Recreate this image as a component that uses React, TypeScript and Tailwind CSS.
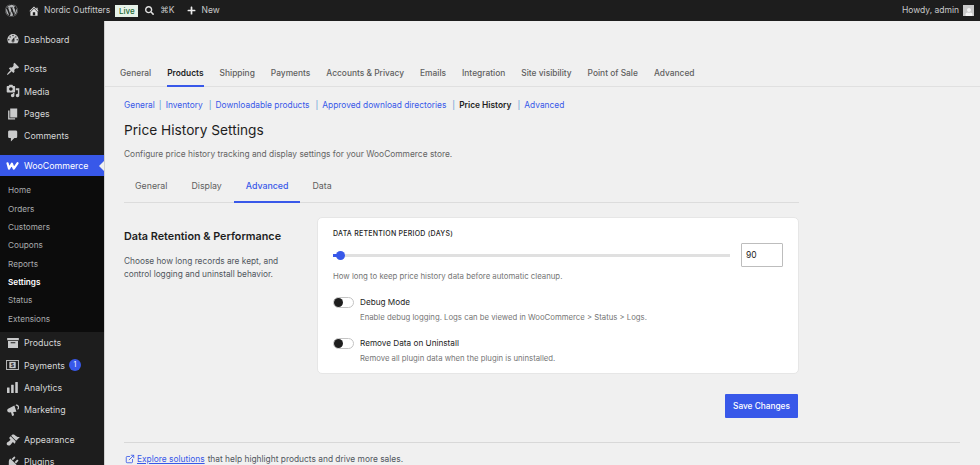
import { ReactNode } from "react";
import { FaWordpress, FaSearch, FaPlus, FaUser } from "react-icons/fa";
import { LuExternalLink } from "react-icons/lu";

// dashicon style glyph on a 20x20 box
function Dash({ d, className = "w-[14px] h-[14px]" }: { d: string; className?: string }) {
  return (
    <svg viewBox="0 0 20 20" className={className} fill="currentColor">
      <path d={d} />
    </svg>
  );
}

const icons = {
  home: "M16 8.5l1.53 1.53-1.06 1.06L10 4.62l-6.47 6.47-1.06-1.06L10 2.5l4 4v-2h2v4zm-6-2.46l6 5.99V18H4v-5.97zM12 17v-5H8v5h4z",
  dashboard:
    "M3.76 16h12.48c1.1-1.43 1.76-3.14 1.76-5 0-4.42-3.58-8-8-8s-8 3.58-8 8c0 1.86.66 3.57 1.76 5zM10 4c.55 0 1 .45 1 1s-.45 1-1 1-1-.45-1-1 .45-1 1-1zM6 6c.55 0 1 .45 1 1s-.45 1-1 1-1-.45-1-1 .45-1 1-1zm8 0c.55 0 1 .45 1 1s-.45 1-1 1-1-.45-1-1 .45-1 1-1zm-5.37 5.55L12 7v6c0 1.1-.9 2-2 2s-2-.9-2-2c0-.57.24-1.08.63-1.45zM4 10c.55 0 1 .45 1 1s-.45 1-1 1-1-.45-1-1 .45-1 1-1zm12 0c.55 0 1 .45 1 1s-.45 1-1 1-1-.45-1-1 .45-1 1-1zm-5 3c0-.55-.45-1-1-1s-1 .45-1 1 .45 1 1 1 1-.45 1-1z",
  post: "M10.44 3.02l1.82-1.82 6.36 6.35-1.83 1.82c-1.05-.68-2.48-.57-3.41.36l-.75.75c-.92.93-1.04 2.35-.35 3.41l-1.83 1.82-2.41-2.41-2.8 2.79c-.42.42-3.38 2.71-3.8 2.29s1.86-3.39 2.28-3.81l2.79-2.79L4.1 9.36l1.83-1.82c1.05.69 2.48.57 3.4-.36l.75-.75c.93-.92 1.05-2.35.36-3.41z",
  media:
    "M13 11V4c0-.55-.45-1-1-1h-1.67L9 1H5L3.67 3H2c-.55 0-1 .45-1 1v7c0 .55.45 1 1 1h10c.55 0 1-.45 1-1zM7 4.5c1.38 0 2.5 1.12 2.5 2.5S8.38 9.5 7 9.5 4.5 8.38 4.5 7 5.62 4.5 7 4.5zM14 6h5v10.5c0 1.38-1.12 2.5-2.5 2.5S14 17.88 14 16.5s1.12-2.5 2.5-2.5c.17 0 .34.02.5.05V9h-3V6zm-4 8.05V13h2v3.5c0 1.38-1.12 2.5-2.5 2.5S7 17.88 7 16.5 8.12 14 9.5 14c.17 0 .34.02.5.05z",
  page: "M6 15V2h10v13H6zm-1 1h8v2H3V5h2v11z",
  comments: "M5 2h9c1.1 0 2 .9 2 2v7c0 1.1-.9 2-2 2h-2l-5 5v-5H5c-1.1 0-2-.9-2-2V4c0-1.1.9-2 2-2z",
  appearance:
    "M14.48 11.06L7.41 3.99l1.5-1.5c.5-.56 2.3-.47 3.51.32 1.21.8 1.43 1.28 2.91 2.1 1.18.64 2.45 1.26 4.45.85zm-.71.71L6.7 4.7 4.93 6.47c-.39.39-.39 1.02 0 1.41l1.06 1.06c.39.39.39 1.03 0 1.42-.6.6-1.43 1.11-2.21 1.69-.35.26-.7.53-1.01.84C1.43 13.23 1 14.2 1 15.5 1 16.88 2.12 18 3.5 18c1.3 0 2.27-.43 3.11-1.27.31-.31.58-.66.84-1.01.58-.78 1.09-1.61 1.69-2.21.39-.39 1.03-.39 1.42 0l1.06 1.06c.39.39 1.02.39 1.41 0z",
  plugins:
    "M13.11 4.36L9.87 7.6 8 5.73l3.24-3.24c.35-.34 1.05-.2 1.56.32.52.51.66 1.21.31 1.55zm-8 1.77l.91-1.12 9.01 9.01-1.19.84c-.71.71-2.63 1.16-3.82 1.16H6.14L4.9 17.26c-.59.59-1.54.59-2.12 0-.59-.58-.59-1.53 0-2.12l1.24-1.24v-3.88c0-1.13.4-3.19 1.09-3.89zm7.26 3.97l3.24-3.24c.34-.35 1.04-.21 1.55.31.52.51.66 1.21.31 1.55l-3.24 3.25z",
};

const WooIcon = () => (
  <svg viewBox="0 0 16 10" className="w-[13px] h-[8px]" fill="none" stroke="#fff" strokeWidth="2.8" strokeLinejoin="round" strokeLinecap="round">
    <path d="M1.8 1.6 3.6 8.2 7.2 2.2 9.6 8.2 14.2 1.6" />
  </svg>
);

const ProductsIcon = () => (
  <svg viewBox="0 0 14 12" className="w-[12px] h-[10px]" fill="#c9cacb">
    <path d="M0 0h14v2.6H0zM1 3.6h12V12H1zm3.2 1.5v1.2h5.6V5.1z" fillRule="evenodd" />
  </svg>
);

const PaymentsIcon = () => (
  <svg viewBox="0 0 14 11" className="w-[13px] h-[10px]">
    <rect x="0.5" y="0.5" width="13" height="10" fill="none" stroke="#c9cacb" />
    <rect x="3.5" y="2" width="7" height="7" fill="#c9cacb" />
    <text x="7" y="8" textAnchor="middle" fontSize="6.5" fontWeight="700" fill="#1d1d1d" fontFamily="Liberation Sans, sans-serif">
      $
    </text>
  </svg>
);

const AnalyticsIcon = () => (
  <svg viewBox="0 0 12 12" className="w-[11px] h-[11px]" fill="#c9cacb">
    <rect x="0" y="6" width="2.8" height="6" rx="0.4" />
    <rect x="4.5" y="3" width="2.8" height="9" rx="0.4" />
    <rect x="9" y="0" width="2.8" height="12" rx="0.4" />
  </svg>
);

const MarketingIcon = () => (
  <svg viewBox="0 0 12 12" className="w-[12px] h-[12px]" fill="#c9cacb">
    <path d="M0.2 6.2c0-1 .6-1.5 1.4-1.8L7.4 1.4l2 6.4-3.2.3.9 3.2-2 .6-1.1-3.6-1.4.1C1.2 8.5.2 7.6.2 6.2z" />
    <path d="M9 .6a2.7 2.7 0 0 1 1.6 5.1l-.4-1a1.6 1.6 0 0 0-1.5-2.8z" />
  </svg>
);

function NavItem({ icon, label, badge }: { icon: ReactNode; label: string; badge?: string }) {
  return (
    <div className="h-[22.3px] flex items-center text-[8.8px] text-[#d5d6d7]">
      <span className="w-[24px] pl-[1px] flex justify-center shrink-0 text-[#c9cacb]">{icon}</span>
      <span>{label}</span>
      {badge && (
        <span className="ml-[4px] w-[12px] h-[12px] rounded-full bg-[#3858e9] text-white text-[7px] flex items-center justify-center">
          {badge}
        </span>
      )}
    </div>
  );
}

const subItems = ["Home", "Orders", "Customers", "Coupons", "Reports", "Settings", "Status", "Extensions"];
const mainTabs = ["General", "Products", "Shipping", "Payments", "Accounts & Privacy", "Emails", "Integration", "Site visibility", "Point of Sale", "Advanced"];
const subLinks = ["General", "Inventory", "Downloadable products", "Approved download directories", "Price History", "Advanced"];
const innerTabs = ["General", "Display", "Advanced", "Data"];

function Toggle() {
  return (
    <span className="w-[21px] h-[11px] rounded-full border border-[#c4c4c4] bg-white shrink-0 flex items-center">
      <span className="w-[9px] h-[9px] rounded-full bg-[#1e1e1e]" />
    </span>
  );
}

function ToggleRow({ label, help }: { label: string; help: string }) {
  return (
    <div>
      <div className="flex items-center gap-[6px]">
        <Toggle />
        <span className="text-[8.2px] leading-[12px] text-[#1e1e1e]">{label}</span>
      </div>
      <p className="ml-[27px] mt-[3px] text-[7.75px] leading-[12px] text-[#757575]">{help}</p>
    </div>
  );
}

export default function App() {
  return (
    <div className="w-[980px] h-[465px] overflow-hidden bg-[#f0f0f0] font-['Inter',sans-serif] flex flex-col">
      {/* admin bar */}
      <header className="h-[21px] shrink-0 bg-[#1d1d1d] flex items-center text-[8.5px] text-[#c9cacb]">
        <FaWordpress className="ml-[5px] w-[13px] h-[13px] text-[#b4b6b8]" />
        <span className="ml-[10px] text-[#e0e0e0]">
          <Dash d={icons.home} className="w-[12px] h-[12px]" />
        </span>
        <span className="ml-[4px]">Nordic Outfitters</span>
        <span className="ml-[5px] w-[23px] h-[12px] bg-[#e6f2e8] text-[#1e6b34] text-[8px] font-medium flex items-center justify-center">Live</span>
        <FaSearch className="ml-[7px] w-[9px] h-[9px] text-[#e0e0e0]" />
        <span className="ml-[6px]">⌘K</span>
        <FaPlus className="ml-[12px] w-[9px] h-[9px] text-[#ececec]" />
        <span className="ml-[6px]">New</span>
        <span className="ml-auto">Howdy, admin</span>
        <span className="ml-[4px] mr-[6px] w-[11px] h-[11px] bg-[#c9c9c9] flex items-end justify-center overflow-hidden">
          <FaUser className="w-[8px] h-[8px] text-[#f2f2f2]" />
        </span>
      </header>

      <div className="flex-1 flex min-h-0">
        {/* sidebar */}
        <aside className="w-[104px] shrink-0 bg-[#1d1d1d] pt-[7px]">
          <NavItem icon={<Dash d={icons.dashboard} />} label="Dashboard" />
          <div className="h-[7.5px]" />
          <NavItem icon={<Dash d={icons.post} />} label="Posts" />
          <NavItem icon={<Dash d={icons.media} />} label="Media" />
          <NavItem icon={<Dash d={icons.page} />} label="Pages" />
          <NavItem icon={<Dash d={icons.comments} />} label="Comments" />
          <div className="h-[8px]" />
          <div className="relative h-[21.5px] bg-[#3858e9] flex items-center text-[8.8px] text-white">
            <span className="w-[24px] flex justify-center shrink-0">
              <WooIcon />
            </span>
            <span>WooCommerce</span>
            <span className="absolute right-0 top-[6px] border-y-[5px] border-y-transparent border-r-[5px] border-r-[#f0f0f0]" />
          </div>
          <div className="bg-[#0c0c0c] pt-[5px] pb-[4px]">
            {subItems.map((item) => (
              <div
                key={item}
                className={`h-[18.3px] pl-[8px] flex items-center text-[8.2px] ${item === "Settings" ? "font-semibold text-white" : "text-[#a9abad]"}`}
              >
                {item}
              </div>
            ))}
          </div>
          <NavItem icon={<ProductsIcon />} label="Products" />
          <NavItem icon={<PaymentsIcon />} label="Payments" badge="1" />
          <NavItem icon={<AnalyticsIcon />} label="Analytics" />
          <NavItem icon={<MarketingIcon />} label="Marketing" />
          <div className="h-[7.5px]" />
          <NavItem icon={<Dash d={icons.appearance} />} label="Appearance" />
          <NavItem icon={<Dash d={icons.plugins} />} label="Plugins" />
        </aside>

        {/* content */}
        <main className="flex-1 min-w-0 border-l border-[#d0d0d0]">
          <nav className="mt-[31px] h-[35px] px-[15px] border-b border-[#e0e0e0] flex gap-[16px] text-[8.4px] font-medium text-[#5f5f5f]">
            {mainTabs.map((tab) => (
              <span
                key={tab}
                className={`h-[35px] pt-[15px] leading-[12px] ${tab === "Products" ? "text-[#1e1e1e] font-semibold border-b-2 border-[#3858e9]" : ""}`}
              >
                {tab}
              </span>
            ))}
          </nav>

          <div className="pl-[19px] w-[694px]">
            <div className="mt-[12px] h-[12px] flex items-center text-[8.4px] leading-[12px] text-[#3858e9]">
              {subLinks.map((link, i) => (
                <span key={link} className="flex items-center">
                  <span className={link === "Price History" ? "font-semibold text-[#1e1e1e]" : ""}>{link}</span>
                  {i < subLinks.length - 1 && <span className={`mr-[4px] text-[#5b9bd5] ${i === 0 ? "ml-[4px]" : "ml-[6px]"}`}>|</span>}
                </span>
              ))}
            </div>
            <h1 className="mt-[9px] text-[13.7px] leading-[20px] text-[#1e1e1e]">Price History Settings</h1>
            <p className="mt-[8px] text-[8.4px] leading-[12px] text-[#646464]">
              Configure price history tracking and display settings for your WooCommerce store.
            </p>

            <div className="mt-[11px] h-[32px] border-b border-[#dcdcdc] flex text-[8.8px] text-[#5f5f5f]">
              {innerTabs.map((tab, i) => (
                <span
                  key={tab}
                  className={`px-[12px] h-[32px] pt-[9px] leading-[12px] ${i === 0 ? "-ml-px" : ""} ${tab === "Advanced" ? "font-medium text-[#3858e9] border-b-2 border-[#3858e9]" : ""}`}
                >
                  {tab}
                </span>
              ))}
            </div>

            <div className="mt-[14px] flex">
              <div className="w-[193px] shrink-0 pt-[12px]">
                <h2 className="text-[10.8px] leading-[16px] font-semibold text-[#1e1e1e]">Data Retention &amp; Performance</h2>
                <p className="mt-[10px] max-w-[165px] text-[8.3px] leading-[12.5px] text-[#50575e]">
                  Choose how long records are kept, and control logging and uninstall behavior.
                </p>
              </div>
              <section className="flex-1 h-[157px] bg-white rounded-[5px] border border-[#e6e6e6] px-[15px] pt-[11px]">
                <div className="text-[7px] leading-[10px] font-medium tracking-[0.25px] text-[#1e1e1e]">DATA RETENTION PERIOD (DAYS)</div>
                <div className="mt-[4px] flex items-center gap-[11px]">
                  <div className="relative flex-1 h-[3px] bg-[#e0e0e0]">
                    <span className="absolute left-0 top-0 h-[3px] w-[5px] bg-[#3858e9]" />
                    <span className="absolute left-[3px] top-[-3px] w-[9px] h-[9px] rounded-full bg-[#3858e9]" />
                  </div>
                  <div className="w-[42px] h-[24px] border border-[#bdbdbd] rounded-[1px] pl-[4px] flex items-center text-[8.5px] text-[#1e1e1e]">90</div>
                </div>
                <p className="mt-[3px] text-[7.8px] leading-[12px] text-[#757575]">How long to keep price history data before automatic cleanup.</p>
                <div className="mt-[14px] flex flex-col gap-[14px]">
                  <ToggleRow label="Debug Mode" help="Enable debug logging. Logs can be viewed in WooCommerce > Status > Logs." />
                  <ToggleRow label="Remove Data on Uninstall" help="Remove all plugin data when the plugin is uninstalled." />
                </div>
              </section>
            </div>

            <div className="mt-[20px] pr-px flex justify-end">
              <button className="w-[73px] h-[24px] bg-[#3858e9] rounded-[1px] text-white text-[8.3px] font-medium">Save Changes</button>
            </div>
          </div>

          <div className="ml-[19px] mr-[20px] mt-[24px] border-t border-[#d8d8d8] pt-[10px] flex items-center text-[8.4px] leading-[12px] text-[#50575e]">
            <LuExternalLink className="ml-[1px] w-[10px] h-[10px] text-[#3858e9] mr-[2px]" />
            <span className="text-[#3858e9] underline">Explore solutions</span>
            <span className="ml-[3px]">that help highlight products and drive more sales.</span>
          </div>
        </main>
      </div>
    </div>
  );
}
